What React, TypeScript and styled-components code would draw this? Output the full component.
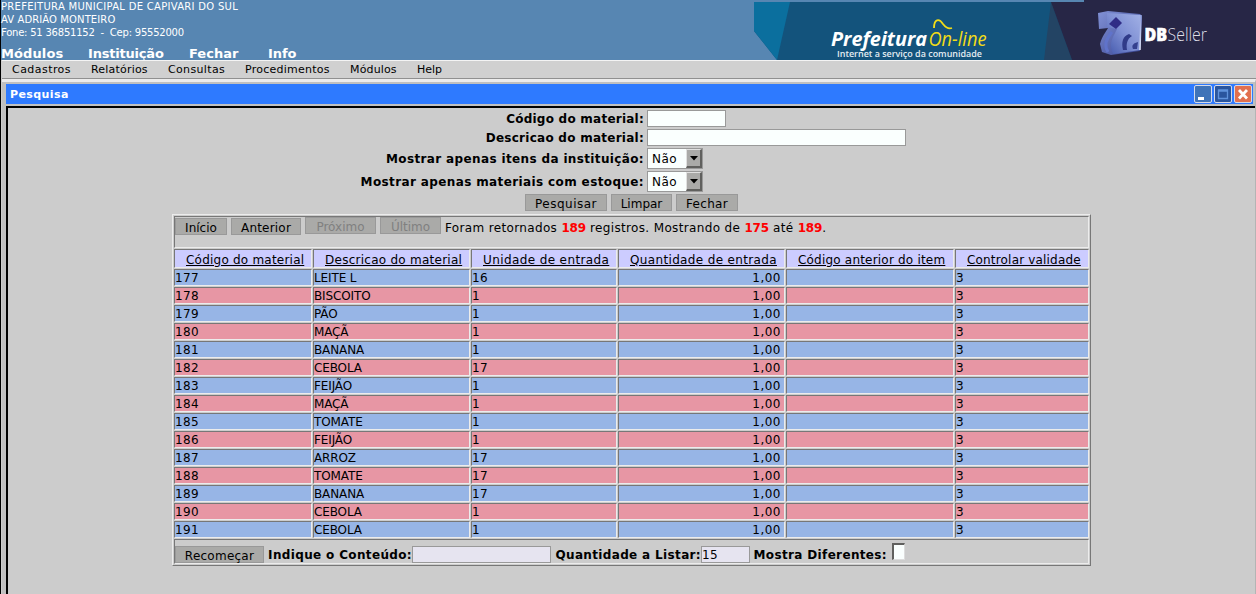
import React from 'react';
import styled, { createGlobalStyle } from 'styled-components';

const Global = createGlobalStyle`
  * { box-sizing: border-box; }
  body { margin: 0; background: #ccc; overflow: hidden; }
  body, button, input { font-family: "DejaVu Sans", sans-serif; font-size: 12px; color: #000; }
`;

const Page = styled.div`
  width: 1256px; height: 594px; display: flex; flex-direction: column;
  border-left: 1px solid #000; background: #ccc;
`;
const Header = styled.header`
  height: 60px; flex: none; display: flex; justify-content: space-between;
  background: #5786b2; color: #fff;
`;
const HeaderInfo = styled.div`display: flex; flex-direction: column;`;
const Address = styled.div`height: 46px;`;
const AddressLine = styled.div<{ $ls: number }>`
  font-size: 10px; line-height: 13px; white-space: pre; letter-spacing: ${p => p.$ls}px;
`;
const MainMenu = styled.nav`display: flex; font-size: 13px; font-weight: bold; line-height: 16px; height: 14px;`;
const MenuItem = styled.span<{ $w: number; $ls: number }>`
  width: ${p => p.$w}px; letter-spacing: ${p => p.$ls}px; white-space: nowrap;
`;
const Banner = styled.svg`width: 502px; height: 60px; flex: none; display: block;`;
const MenuBar = styled.nav`
  height: 19px; flex: none; display: flex; padding-left: 10px; margin-left: 1px;
  background: #d0d0d0; border-top: 1px solid #f4f4f4; border-bottom: 1px solid #909090;
  font-size: 11px; line-height: 17px;
`;
const Frame = styled.section`
  flex: 1; min-height: 0; display: flex; flex-direction: column; margin-left: 1px;
  border-top: 3px solid #ececec; border-right: 1px solid #b4b4b4;
  background: #c0c0c0; padding: 2px 2px 0 4px;
`;
const TitleBar = styled.div`
  height: 20px; flex: none; display: flex; align-items: center; justify-content: space-between;
  background: #2e7aff; color: #fff; font-size: 11px; font-weight: bold; letter-spacing: .4px; padding: 0 1px 0 4px;
`;
const WindowButtons = styled.div`display: flex; gap: 2px;`;
const Content = styled.main`
  flex: 1; min-height: 0; margin: 2px -2px 0 0; background: #ccc; border-top: 2px solid #000; border-left: 2px solid #000;
  display: flex; flex-direction: column;
`;
const Form = styled.form`display: flex; flex-direction: column; gap: 2px; padding-top: 2px;`;
const FormRow = styled.div<{ $h: number }>`height: ${p => p.$h}px; display: flex; align-items: center; gap: 3px;`;
const Label = styled.label<{ $ls: number }>`
  width: 636px; text-align: right; font-weight: bold; font-size: 12px; line-height: 16px; white-space: nowrap;
  letter-spacing: ${p => p.$ls}px;
`;
const Field = styled.input<{ $w: number; $tint?: boolean }>`
  width: ${p => p.$w}px; height: 17px; padding: 1px 0 0; border: 1px solid #999; border-radius: 0; outline: none;
  letter-spacing: .3px; background: ${p => (p.$tint ? '#e6e4f0' : '#fafffe')};
`;
const SelectBox = styled.div`
  width: 56px; height: 21px; display: flex; justify-content: space-between; border: 1px solid #999;
  background: #fafffe; padding-left: 4px; line-height: 20px; letter-spacing: .5px;
`;
const SelectArrow = styled.span`
  width: 16px; height: 19px; display: flex; align-items: center; justify-content: center;
  background: #aaaaa8; border: solid; border-width: 1px 2px 2px 1px; border-color: #e0e0e0 #60605e #60605e #e0e0e0;
`;
const Actions = styled.div`display: flex; gap: 4px; padding-left: 517px;`;
const Button = styled.button<{ $w: number; $ls?: number }>`
  width: ${p => p.$w}px; height: 17px; flex: none; padding: 1px 0 0; border: 1px solid #999; border-radius: 0;
  background: #aaaaa8; line-height: 16px; white-space: nowrap; letter-spacing: ${p => p.$ls ?? 0}px;
  &:disabled { color: #808080; margin-top: -1px; }
`;
const Results = styled.div`
  width: 919px; margin: 3px 0 0 164px; padding: 1px; display: grid; gap: 1px;
  grid-template-columns: 138px 157px 146px 167px 168px 134px;
  grid-template-rows: 32px 19px repeat(15, 17px) 25px;
  border: 1px solid; border-color: #ececec #777 #777 #ececec;
`;
const Cell = styled.div<{ $bg?: string; $right?: boolean; $ls?: number }>`
  border: 1px solid; border-color: #777 #ececec #ececec #777; background: ${p => p.$bg || '#ccc'};
  line-height: 16px; height: 17px; white-space: nowrap; overflow: hidden; letter-spacing: ${p => p.$ls ?? 0}px;
  text-align: ${p => (p.$right ? 'right' : 'left')}; padding-right: ${p => (p.$right ? 3 : 0)}px;
`;
const HeadCell = styled(Cell)`
  height: 19px; line-height: 20px; padding-left: 11px; text-decoration: underline;
`;
const WideCell = styled(Cell)<{ $top: number }>`
  grid-column: 1 / -1; height: auto; display: flex; padding-top: ${p => p.$top}px;
`;
const Pager = styled.div`display: flex; gap: 4px;`;
const Status = styled.span`line-height: 20px; letter-spacing: .35px;`;
const Count = styled.b`color: #f00; letter-spacing: -.2px;`;
const FootLabel = styled.label<{ $w: number }>`
  width: ${p => p.$w}px; text-align: right; font-weight: bold; line-height: 19px; white-space: nowrap;
  letter-spacing: .35px;
`;
const CheckBox = styled.span`
  width: 13px; height: 17px; margin: -3px 0 0 5px; background: #fafffe;
  border: solid; border-width: 2px 1px 1px 2px; border-color: #60605e #ddd #ddd #60605e;
`;

const heads: [string, number][] = [
  ['Código do material', 0.22], ['Descricao do material', 0.26], ['Unidade de entrada', 0.39],
  ['Quantidade de entrada', 0.35], ['Código anterior do item', 0.2], ['Controlar validade', 0.18],
];
const items: [string, string][] = [
  ['LEITE L', '16'], ['BISCOITO', '1'], ['PÃO', '1'], ['MAÇÃ', '1'], ['BANANA', '1'],
  ['CEBOLA', '17'], ['FEIJÃO', '1'], ['MAÇÃ', '1'], ['TOMATE', '1'], ['FEIJÃO', '1'],
  ['ARROZ', '17'], ['TOMATE', '17'], ['BANANA', '17'], ['CEBOLA', '1'], ['CEBOLA', '1'],
];
const mainMenu: [string, number, number][] = [
  ['Módulos', 87, 0.1], ['Instituição', 101, -0.2], ['Fechar', 79, 0], ['Info', 40, -0.1],
];
const menu: [string, number, number][] = [
  ['Cadastros', 79, 0.45], ['Relatórios', 77, 0.2], ['Consultas', 77, 0.35],
  ['Procedimentos', 105, 0.25], ['Módulos', 67, 0.15], ['Help', 40, 0],
];

const HeaderBanner = () => (
  <Banner viewBox="754 0 502 60">
    <defs>
      <linearGradient id="cube" x1="0" y1="1" x2="1" y2="0">
        <stop offset="0" stopColor="#4358ac" /><stop offset=".5" stopColor="#7f90d4" /><stop offset="1" stopColor="#a3b2e6" />
      </linearGradient>
      <linearGradient id="side" x1="0" y1="0" x2="1" y2="1">
        <stop offset="0" stopColor="#8292d6" /><stop offset="1" stopColor="#35418f" />
      </linearGradient>
      <linearGradient id="edge" x1="0" y1="0" x2="0" y2="1">
        <stop offset="0" stopColor="#8f9fdc" /><stop offset="1" stopColor="#dfe4f6" />
      </linearGradient>
    </defs>
    <path d="M754 2H1256V60H777L754 31Z" fill="#13537c" />
    <path d="M754 2H790L777 60L754 31Z" fill="#0b6f9e" />
    <path d="M1051 2L1072 60H1044Z" fill="#234464" />
    <path d="M1051 2H1084V0H1256V60H1072Z" fill="#272646" />
    <text x="831" y="46" fill="#fff" fontFamily="Open Sans, sans-serif" fontWeight="700" fontStyle="italic" fontSize="19.500" textLength="96" lengthAdjust="spacingAndGlyphs">Prefeitura</text>
    <text x="928.500" y="46" fill="#f2dc17" fontFamily="Open Sans, sans-serif" fontStyle="italic" fontSize="20" textLength="58" lengthAdjust="spacingAndGlyphs">On-line</text>
    <path d="M934 28C934 19 939 18 943 24C946 28 949 29 952 28" fill="none" stroke="#f2dc17" strokeWidth="1.8" />
    <text x="837" y="56.500" fill="#e4edf2" fontFamily="Open Sans, sans-serif" fontWeight="600" fontSize="9.500" textLength="145" lengthAdjust="spacingAndGlyphs">Internet a serviço da comunidade</text>
    <path d="M1098 13L1108 11L1140 14L1142 16L1140 51L1111 55L1102 52L1100 44C1102 36 1106 32 1108 28L1099 29Z" fill="url(#side)" />
    <path d="M1107 13L1141 15L1140 50L1113 54C1108 42 1114 36 1117 29L1107 27Z" fill="url(#cube)" />
    <path d="M1141 15L1140 50" stroke="url(#edge)" strokeWidth="1.500" />
    <path d="M1116 17L1122 23L1116 29L1109 24Z" fill="#302d86" />
    <path d="M1123 50C1121 42 1123 36 1129 34L1132 36C1127 39 1126 44 1127 50Z" fill="#303b88" />
    <path d="M1133 49C1131 45 1134 43 1138 42L1137 49Z" fill="#34408e" />
    <path d="M1112 32C1105 40 1104 46 1108 52" fill="none" stroke="#6073ca" strokeWidth="3" />
    <text x="1144.500" y="41" fill="#fff" stroke="#fff" strokeWidth=".6" fontFamily="Open Sans, sans-serif" fontWeight="800" fontSize="17" textLength="22.500" lengthAdjust="spacingAndGlyphs">DB</text>
    <text x="1167.500" y="41" fill="#dedee8" fontFamily="Open Sans, sans-serif" fontWeight="300" fontSize="18" textLength="39.500" lengthAdjust="spacingAndGlyphs">Seller</text>
  </Banner>
);

const WinIcon = ({ kind }: { kind: 'min' | 'max' | 'close' }) => (
  <svg width="18" height="18" viewBox="0 0 18 18">
    <rect x=".5" y=".5" width="17" height="17" rx="1.500" fill={kind === 'min' ? '#3f73b8' : kind === 'max' ? '#2a559e' : '#e2704f'} stroke="#d5dbea" />
    {kind === 'min' && <rect x="4" y="12" width="6" height="3" fill="#fff" />}
    {kind === 'max' && <path d="M4.500 5H13.500V13.500H4.500ZM4.500 6H13.500" fill="none" stroke="#5f92dc" strokeWidth="1.300" />}
    {kind === 'close' && <path d="M5 5L13 13.500M13 5L5 13.500" stroke="#fff" strokeWidth="2.800" />}
  </svg>
);

const Select = () => (
  <SelectBox>Não<SelectArrow><svg width="8" height="5" viewBox="0 0 8 5"><path d="M0 0H8L4 4.500Z" /></svg></SelectArrow></SelectBox>
);

export default function App() {
  return (
    <Page>
      <Global />
      <Header>
        <HeaderInfo>
          <Address>
            <AddressLine $ls={0.29}>PREFEITURA MUNICIPAL DE CAPIVARI DO SUL</AddressLine>
            <AddressLine $ls={0.1}>AV ADRIÃO MONTEIRO</AddressLine>
            <AddressLine $ls={-0.22}>{'Fone: 51 36851152  -  Cep: 95552000'}</AddressLine>
          </Address>
          <MainMenu>{mainMenu.map(([t, w, ls]) => <MenuItem key={t} $w={w} $ls={ls}>{t}</MenuItem>)}</MainMenu>
        </HeaderInfo>
        <HeaderBanner />
      </Header>
      <MenuBar>{menu.map(([t, w, ls]) => <MenuItem key={t} $w={w} $ls={ls}>{t}</MenuItem>)}</MenuBar>
      <Frame>
        <TitleBar>
          Pesquisa
          <WindowButtons><WinIcon kind="min" /><WinIcon kind="max" /><WinIcon kind="close" /></WindowButtons>
        </TitleBar>
        <Content>
          <Form>
            <FormRow $h={17}><Label $ls={0.24}>Código do material:</Label><Field $w={79} /></FormRow>
            <FormRow $h={17}><Label $ls={0.26}>Descricao do material:</Label><Field $w={259} /></FormRow>
            <FormRow $h={21}><Label $ls={0.36}>Mostrar apenas itens da instituição:</Label><Select /></FormRow>
            <FormRow $h={21}><Label $ls={0.38}>Mostrar apenas materiais com estoque:</Label><Select /></FormRow>
            <Actions>
              <Button type="button" $w={82} $ls={0.5}>Pesquisar</Button>
              <Button type="button" $w={61}>Limpar</Button>
              <Button type="button" $w={62} $ls={0.3}>Fechar</Button>
            </Actions>
          </Form>
          <Results>
            <WideCell $top={1}>
              <Pager>
                <Button $w={52}>Início</Button>
                <Button $w={70} $ls={0.2}>Anterior</Button>
                <Button $w={71} disabled>Próximo</Button>
                <Button $w={61} disabled>Último</Button>
                <Status>Foram retornados <Count>189</Count> registros. Mostrando de <Count>175</Count> até <Count>189</Count>.</Status>
              </Pager>
            </WideCell>
            {heads.map(([h, ls]) => <HeadCell key={h} $bg="#ccccff" $ls={ls}>{h}</HeadCell>)}
            {items.map(([name, unit], i) => {
              const bg = i % 2 ? '#e796a4' : '#97b5e6';
              return (
                <React.Fragment key={i}>
                  <Cell $bg={bg} $ls={0.35}>{177 + i}</Cell>
                  <Cell $bg={bg} $ls={-0.12}>{name}</Cell>
                  <Cell $bg={bg} $ls={0.35}>{unit}</Cell>
                  <Cell $bg={bg} $ls={0.5} $right>1,00</Cell>
                  <Cell $bg={bg} />
                  <Cell $bg={bg}>3</Cell>
                </React.Fragment>
              );
            })}
            <WideCell $top={6}>
              <Button $w={89} $ls={0.25}>Recomeçar</Button>
              <FootLabel $w={148}>Indique o Conteúdo:</FootLabel>
              <Field $w={139} $tint />
              <FootLabel $w={150}>Quantidade a Listar:</FootLabel>
              <Field $w={49} $tint defaultValue="15" />
              <FootLabel $w={137}>Mostra Diferentes:</FootLabel>
              <CheckBox />
            </WideCell>
          </Results>
        </Content>
      </Frame>
    </Page>
  );
}
